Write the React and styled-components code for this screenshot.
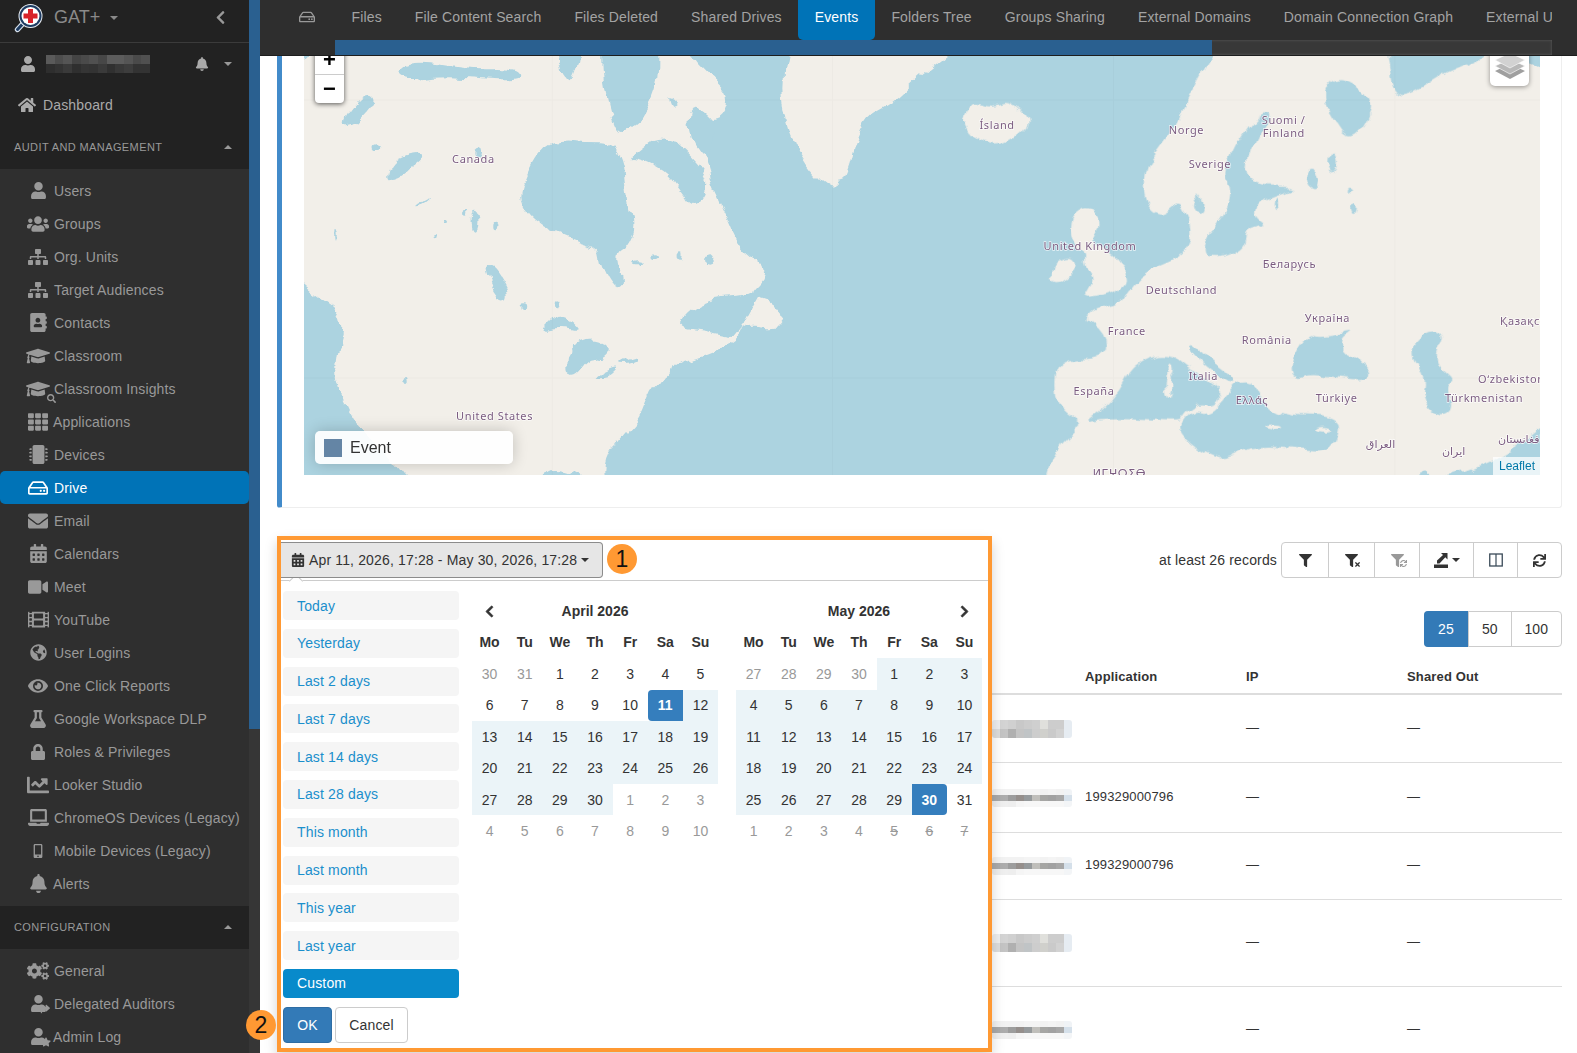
import React from 'react';
import styled, { createGlobalStyle, css } from 'styled-components';
import {
  FaUser, FaUsers, FaSitemap, FaAddressBook, FaGraduationCap, FaTh, FaMicrochip, FaRegHdd, FaEnvelope,
  FaCalendarAlt, FaVideo, FaFilm, FaGlobeAmericas, FaEye, FaFlask, FaLock, FaChartLine, FaLaptop,
  FaMobileAlt, FaBell, FaCogs, FaHome, FaChevronLeft, FaChevronRight, FaFilter, FaSync, FaSearch, FaStar,
  FaShare, FaTimes,
} from 'react-icons/fa';

const Global = createGlobalStyle`
  html, body { margin: 0; padding: 0; height: 1053px; overflow: hidden; background: #fff; }
  body { font-family: "Liberation Sans", Arial, sans-serif; font-size: 14px; color: #333; letter-spacing: 0.15px; }
  * { box-sizing: border-box; }
`;

const Page = styled.div`
  display: grid; grid-template-columns: 249px 11px 1fr; width: 1577px; height: 1053px; overflow: hidden;
`;

/* ---------- sidebar ---------- */
const Sidebar = styled.aside`
  background: #2f2f2f; color: #999; height: 1053px; overflow: hidden;
`;
const DarkTop = styled.div`background: #222;`;
const Brand = styled.div`
  height: 43px; display: flex; align-items: center; padding: 0 20px 7px 14px; border-bottom: 1px solid #3b3b3b;
`;
const BrandName = styled.span`font-size: 18px; color: #8a8a8a; margin-left: 10px; letter-spacing: 0;`;
const Caret = styled.span`
  display: inline-block; width: 0; height: 0; border-left: ${p => p.$s || 4}px solid transparent;
  border-right: ${p => p.$s || 4}px solid transparent;
  ${p => p.$up
    ? css`border-bottom: ${p.$s || 4}px solid ${p.$c || '#999'};`
    : css`border-top: ${p.$s || 4}px solid ${p.$c || '#999'};`}
`;
const BrandCaret = styled(Caret)`margin-left: 10px;`;
const Back = styled.span`margin-left: auto; display: flex; color: #999; font-size: 15px; margin-right: 1px;`;
const UserRow = styled.div`
  height: 41px; display: flex; align-items: center; padding: 0 17px 0 20px; color: #aaa; font-size: 16px;
`;
const BellSlot = styled.span`margin-left: auto; display: flex; font-size: 14px; margin-right: 15px;`;
const Mosaic = styled.div`
  width: ${p => p.$w}px; height: ${p => p.$h}px; flex: none;
  background-color: ${p => p.$bg || 'transparent'};
  background-repeat: no-repeat;
  background-image: ${p => p.$rows.map(r => {
    const step = 100 / r.length;
    return `linear-gradient(90deg, ${r.map((c, i) => `${c} ${i * step}% ${(i + 1) * step}%`).join(', ')})`;
  }).join(', ')};
  background-size: 100% ${p => 100 / p.$rows.length}%;
  background-position: ${p => p.$rows.map((_, i) => `0 ${p.$rows.length > 1 ? (i * 100) / (p.$rows.length - 1) : 0}%`).join(', ')};
  border-radius: ${p => p.$r || 0}px;
`;
const UserBlur = styled(Mosaic)`margin-left: 10px;`;
const Dash = styled.div`
  height: 42px; display: flex; align-items: center; padding-left: 18px; gap: 7px; font-size: 14px; color: #aaa;
  svg { font-size: 18px; }
`;
const Section = styled.div`
  height: ${p => p.$h}px; display: flex; align-items: center; justify-content: space-between;
  padding: 0 17px 2px 14px; background: #222; font-size: 11px; color: #999; letter-spacing: 0.4px;
`;
const MenuList = styled.ul`
  list-style: none; margin: 0; padding: ${p => p.$pad};
`;
const MenuItem = styled.li`
  height: 33px; display: flex; align-items: center; color: ${p => p.$on ? '#fff' : '#999'};
  background: ${p => p.$on ? '#0073b7' : 'transparent'}; border-radius: ${p => p.$on ? '5px' : '0'};
  white-space: nowrap;
`;
const IconSlot = styled.span`
  width: 30px; margin-left: 23px; margin-right: ${p => p.$tight ? 0 : 1}px; display: flex; justify-content: center;
  align-items: center; position: relative; font-size: ${p => p.$size || 18}px; flex: none;
`;
const SmallOver = styled.span`
  position: absolute; right: ${p => p.$right ?? 0}px; bottom: ${p => p.$bottom ?? -2}px; display: flex;
  font-size: ${p => p.$size || 9}px; color: ${p => p.$c || 'inherit'};
`;

/* ---------- scrollbar strip ---------- */
const Strip = styled.div`background: #363636; height: 1053px;`;
const StripThumb = styled.div`height: 729px; background: #2a6090;`;

/* ---------- main ---------- */
const Main = styled.main`min-width: 0; position: relative; z-index: 1;`;
const TopBar = styled.header`
  height: 56px; background: #2e2e2e; border-bottom: 1px solid #1d1d1d;
`;
const TabRow = styled.nav`
  height: 40px; display: flex; align-items: stretch; width: 1292px; overflow: hidden;
`;
const TabIcon = styled.span`
  width: 75px; flex: none; display: flex; align-items: center; padding: 0 0 6px 39px; color: #999; font-size: 16px;
`;
const Tab = styled.a`
  flex: none; display: flex; align-items: center; padding: 0 16.5px 6px; font-size: 14px; white-space: nowrap;
  color: ${p => p.$on ? '#fff' : '#a3a3a3'}; background: ${p => p.$on ? '#0073b7' : 'transparent'};
  border-radius: 0 0 5px 5px;
`;
const HScroll = styled.div`
  height: 15px; margin-left: 75px; width: 1217px;
  background: #383838; box-shadow: inset 0 0 3px #5d5d5d;
`;
const HThumb = styled.div`height: 100%; width: 877px; background: #2a6090;`;

const Content = styled.div`padding: 0 15px 0 17px;`;
const MapPanel = styled.section`
  height: 452px; border: 1px solid #eee; border-top: 0; border-left: 5px solid #428bca;
  border-radius: 0 0 3px 3px; padding-left: 22px; padding-right: 21px; background: #fff;
`;
const MapBox = styled.div`position: relative; height: 419px; overflow: hidden; background: #acd3e0;`;
const MapSvg = styled.svg`display: block; width: 100%; height: 100%;`;
const MapLabel = styled.text`
  font-family: "Noto Sans", "DejaVu Sans", sans-serif; font-size: 11px; letter-spacing: 0.6px; fill: #7b5c80;
  stroke: rgba(255,255,255,.75); stroke-width: 1.5px; paint-order: stroke;
`;
const ZoomCtl = styled.div`
  position: absolute; left: 11px; top: -11px; width: 29px; background: #fff; border-radius: 4px;
  box-shadow: 0 1px 5px rgba(0,0,0,.65);
`;
const ZoomBtn = styled.div`
  height: 29px; display: flex; align-items: center; justify-content: center; font-size: 22px; font-weight: 700;
  color: #000; font-family: "Liberation Sans", sans-serif;
  & + & { border-top: 1px solid #ccc; }
`;
const LayersBtn = styled.div`
  position: absolute; right: 11px; top: -12px; width: 39px; height: 42px; background: #fff; border-radius: 5px;
  box-shadow: 0 1px 5px rgba(0,0,0,.4); display: flex; justify-content: center; align-items: center;
`;
const Legend = styled.div`
  position: absolute; left: 11px; bottom: 11px; width: 198px; height: 33px; border-radius: 5px;
  background: rgba(255,255,255,.92); box-shadow: 0 0 15px rgba(0,0,0,.2); display: flex; align-items: center;
  padding-left: 9px; gap: 8px; font-size: 16px; color: #333; letter-spacing: 0;
`;
const Swatch = styled.span`width: 18px; height: 18px; background: #6485a5;`;
const Attribution = styled.div`
  position: absolute; right: 0; bottom: 0; width: 47px; height: 18px; background: rgba(255,255,255,.75);
  font-size: 12px; color: #0078a8; padding-left: 6px; line-height: 18px; white-space: nowrap; overflow: hidden;
  letter-spacing: 0;
`;

const ToolRow = styled.div`
  position: relative; margin-top: 34px; height: 36px; display: flex; justify-content: flex-end; align-items: center; gap: 4px;
`;
const BtnGroup = styled.div`
  display: flex; height: 36px; border: 1px solid #ccc; border-radius: 4px; background: #fff;
`;
const ToolBtn = styled.span`
  width: ${p => p.$w}px; display: flex; align-items: center; justify-content: center; gap: 4px; position: relative;
  color: ${p => p.$c || '#333'}; font-size: 13px;
  & + & { border-left: 1px solid #ccc; }
`;
const PageRow = styled.div`margin-top: 33px; display: flex; justify-content: flex-end;`;
const PageBtn = styled.span`
  width: ${p => p.$w}px; display: flex; align-items: center; justify-content: center; font-size: 14px;
  color: ${p => p.$on ? '#fff' : '#333'}; background: ${p => p.$on ? '#337ab7' : 'transparent'};
  margin: ${p => p.$on ? '-1px 0 -1px -1px' : '0'};
  border-radius: ${p => p.$on ? '4px 0 0 4px' : '0'};
  & + & { border-left: 1px solid #ccc; }
`;
const TableHead = styled.div`
  margin-top: 13px; height: 35px; border-bottom: 2px solid #ddd; display: grid;
  grid-template-columns: 808px 161px 161px 1fr; align-items: center; font-weight: 700; font-size: 13px;
`;
const TableRow = styled.div`
  height: ${p => p.$h}px; border-bottom: 1px solid #ddd; display: grid;
  grid-template-columns: 808px 161px 161px 1fr; align-items: center; font-size: 13px; padding-bottom: 3px;
`;
const RowBlur = styled(Mosaic)`justify-self: end; margin: 3px 13px 0 0;`;

/* ---------- date range picker ---------- */
const Picker = styled.div`
  position: absolute; left: 0; top: -6px; width: 715px; height: 516px; border: 4px solid #ff9933; background: #fff;
  box-shadow: 0 6px 12px rgba(0,0,0,.175); display: flex; flex-direction: column; z-index: 3;
`;
const PickerHead = styled.div`
  height: 41px; flex: none; padding-top: 2px; display: flex; align-items: flex-start; border-bottom: 1px solid #ccc;
  position: relative;
  &::after {
    content: ''; position: absolute; left: 10px; bottom: -1px; width: 9px; height: 9px;
    border-left: 1px solid #ccc; border-top: 1px solid #ccc; background: #fff; transform: translateY(5px) rotate(45deg);
  }
`;
const RangeToggle = styled.div`
  width: 322px; height: 36px; background: #e6e6e6; border: 1px solid #8c8c8c; border-left: 0; border-radius: 0 4px 4px 0;
  display: flex; align-items: center; padding-left: 10px; gap: 4px; font-size: 14px; color: #333; white-space: nowrap;
  position: relative; z-index: 1; svg { font-size: 14px; }
`;
const Badge = styled.span`
  width: 30px; height: 30px; border-radius: 50%; background: #ff9933; color: #111; font-size: 23px;
  display: flex; align-items: center; justify-content: center; flex: none; letter-spacing: 0;
`;
const BadgeOne = styled(Badge)`margin: 2px 0 0 4px;`;
const BadgeTwo = styled(Badge)`position: absolute; left: -35px; top: 470px;`;
const PickerBody = styled.div`display: flex; flex: 1;`;
const Ranges = styled.div`width: 176px; margin-left: 2px; padding-top: 10px; flex: none;`;
const RangeItem = styled.div`
  height: 29px; margin-bottom: 8.8px; border-radius: 4px; padding-left: 14px; display: flex; align-items: center;
  font-size: 14px; background: ${p => p.$on ? '#088acb' : '#f5f5f5'}; color: ${p => p.$on ? '#fff' : '#1a8fcc'};
`;
const ActionRow = styled.div`display: flex; gap: 3px;`;
const ActionBtn = styled.div`
  width: ${p => p.$w}px; height: 36px; border-radius: 4px; display: flex; align-items: center; justify-content: center;
  font-size: 14px; ${p => p.$primary
    ? css`background: #337ab7; color: #fff; border: 1px solid #2e6da4;`
    : css`background: #fff; color: #333; border: 1px solid #ccc;`}
`;
const Cal = styled.div`
  width: 246px; margin-top: 14px; margin-left: ${p => p.$ml}px; flex: none;
`;
const CalTitle = styled.div`
  height: 32px; display: grid; grid-template-columns: 35px 1fr 35px; align-items: center; justify-items: center;
  font-weight: 700; font-size: 14px; letter-spacing: 0;
  svg { font-size: 13px; color: #333; stroke: currentColor; stroke-width: 30; display: block; }
`;
const CalGrid = styled.div`
  display: grid; grid-template-columns: repeat(7, 1fr); grid-auto-rows: 31.4px;
`;
const WeekDay = styled.div`
  display: flex; align-items: center; justify-content: center; font-weight: 700; font-size: 14px; color: #333;
  letter-spacing: 0; padding-bottom: 2px;
`;
const Day = styled.div`
  display: flex; align-items: center; justify-content: center; font-size: 14px; letter-spacing: 0;
  color: ${p => p.$off ? '#999' : '#333'};
  text-decoration: ${p => p.$strike ? 'line-through' : 'none'};
  background: ${p => p.$range ? '#ebf4f8' : 'transparent'};
  ${p => (p.$start || p.$end) && css`background: #357ebd; color: #fff; font-weight: 700;`}
  ${p => p.$start && css`border-radius: 4px 0 0 4px;`}
  ${p => p.$end && css`border-radius: 0 4px 4px 0;`}
`;

/* ---------- data ---------- */
const Stack = ({ children, small, ...rest }) => (
  <IconSlot {...rest}>{children}{small}</IconSlot>
);
const items = [
  ['Users', <FaUser />, { $size: 17 }],
  ['Groups', <FaUsers />, { $size: 22 }],
  ['Org. Units', <FaSitemap />, { $size: 20 }],
  ['Target Audiences', <FaSitemap />, { $size: 20 }],
  ['Contacts', <FaAddressBook />, { $size: 19 }],
  ['Classroom', <FaGraduationCap />, { $size: 24 }],
  ['Classroom Insights', <FaGraduationCap />, { $size: 24, small: <SmallOver $right={-3} $bottom={-2} $size={9}><FaSearch /></SmallOver> }],
  ['Applications', <FaTh />, { $size: 20, $tight: true }],
  ['Devices', <FaMicrochip />, { $size: 19 }],
  ['Drive', <FaRegHdd />, { $size: 20 }, true],
  ['Email', <FaEnvelope />, { $size: 20 }],
  ['Calendars', <FaCalendarAlt />, { $size: 19 }],
  ['Meet', <FaVideo />, { $size: 20 }],
  ['YouTube', <FaFilm />, { $size: 21 }],
  ['User Logins', <FaGlobeAmericas />, { $size: 17 }],
  ['One Click Reports', <FaEye />, { $size: 20 }],
  ['Google Workspace DLP', <FaFlask />, { $size: 18 }],
  ['Roles & Privileges', <FaLock />, { $size: 16 }],
  ['Looker Studio', <FaChartLine />, { $size: 22 }],
  ['ChromeOS Devices (Legacy)', <FaLaptop />, { $size: 21 }],
  ['Mobile Devices (Legacy)', <FaMobileAlt />, { $size: 14 }],
  ['Alerts', <FaBell />, { $size: 19, $tight: true }],
];
const config = [
  ['General', <FaCogs />, { $size: 22 }],
  ['Delegated Auditors', <FaUser />, { $size: 17, small: <SmallOver $right={3} $bottom={-2} $size={10}><FaShare /></SmallOver> }],
  ['Admin Log', <FaUser />, { $size: 17, $tight: true, small: <SmallOver $right={2} $bottom={-2} $size={10}><FaStar /></SmallOver> }],
];
const tabs = ['Files', 'File Content Search', 'Files Deleted', 'Shared Drives', 'Events', 'Folders Tree', 'Groups Sharing', 'External Domains', 'Domain Connection Graph', 'External Users'];
const ranges = ['Today', 'Yesterday', 'Last 2 days', 'Last 7 days', 'Last 14 days', 'Last 28 days', 'This month', 'Last month', 'This year', 'Last year'];
const weekdays = ['Mo', 'Tu', 'We', 'Th', 'Fr', 'Sa', 'Su'];

const seq = (a, b) => Array.from({ length: b - a + 1 }, (_, i) => a + i);
const april = [
  ...seq(30, 31).map(d => ({ d, off: true })),
  ...seq(1, 30).map(d => ({ d, range: d >= 11, start: d === 11 })),
  ...seq(1, 10).map(d => ({ d, off: true })),
];
const may = [
  ...seq(27, 30).map(d => ({ d, off: true })),
  ...seq(1, 31).map(d => ({ d, range: d <= 30, end: d === 30 })),
  ...seq(1, 7).map(d => ({ d, off: true, strike: d >= 5 })),
];

const labels = [
  ['Canada', 452, 163], ['United States', 456, 420], ['Ísland', 979, 129], ['Norge', 1168, 134], ['Suomi /', 1261, 124],
  ['Finland', 1262, 137], ['Sverige', 1188, 168], ['United Kingdom', 1043, 250], ['Беларусь', 1262, 268], ['Deutschland', 1145, 294],
  ['Україна', 1304, 322], ['Қазақстан', 1499, 325], ['France', 1107, 335], ['România', 1241, 344], ['Italia', 1188, 380],
  ['Oʻzbekiston', 1477, 383], ['Türkmenistan', 1444, 402], ['España', 1073, 395], ['Ελλάς', 1235, 404], ['Türkiye', 1315, 402],
  ['العراق', 1365, 448], ['افغانستان', 1497, 443], ['ایران', 1441, 455], ['ⵍⵎⵖⵔⵉⴱ', 1092, 477],
];

/* closed curve through the midpoints of a polygon: softens the traced coast */
const smooth = a => {
  const mid = (p, q) => `${(p[0] + q[0]) / 2} ${(p[1] + q[1]) / 2}`;
  let d = `M${mid(a[a.length - 1], a[0])}`;
  a.forEach((p, i) => { d += ` Q${p[0]} ${p[1]} ${mid(p, a[(i + 1) % a.length])}`; });
  return `${d}Z`;
};
const naLand = [[0,-100],[1005,-100],[1005,40],[1060,110],[1108,170],[1075,250],[1000,210],[1060,390],[1060,430],[1100,530],[1130,620],[1195,680],[1190,720],[1150,770],[1220,790],[1240,870],[1140,850],[1130,900],[1050,950],[970,970],[965,1010],[915,1040],[890,1130],[850,1180],[810,1250],[815,1340],[790,1340],[690,1270],[600,1340],[340,1340],[300,1270],[210,1160],[160,1040],[155,960],[185,830],[100,760],[40,690]];
const naWater = [
  [[605,450],[640,350],[680,300],[760,310],[830,310],[855,380],[860,480],[880,560],[860,620],[830,640],[850,730],[830,745],[795,680],[795,625],[740,605],[640,550],[605,490]],
  [[855,360],[950,270],[1050,390],[1055,450],[1020,510],[985,450],[950,390],[880,355]],
  [[800,-20],[935,-20],[940,130],[900,240],[855,280],[830,270],[800,120]],
  [[300,100],[350,60],[480,90],[590,85],[600,125],[480,115],[400,110],[330,125]],
  [[680,-20],[755,-20],[730,140],[700,100]],
  [[960,160],[990,190],[970,205]],
  [[1010,190],[1075,250],[1060,370],[1010,300]],
  [[645,875],[700,815],[755,875],[700,860]],
  [[710,1005],[720,920],[780,890],[830,930],[800,970],[770,950],[730,1015]],
  [[775,1015],[845,975],[810,1020]],[[830,970],[885,940],[880,968]],
  [[970,860],[1040,775],[1160,770],[1195,735],[1140,850],[1130,895],[1060,875]],
  [[170,250],[235,150],[260,180],[210,255]],[[275,420],[300,350],[390,335],[310,420]],[[340,505],[400,465],[360,505]],
  [[535,665],[585,770],[550,780],[515,680]],
];
const naLakes = [[500,330,8,16],[490,545,7,24],[470,520,5,10],[545,555,5,10],[425,545,6,5],[395,590,4,8],[250,320,8,10],[700,790,7,12],[1060,660,10,14],[930,650,9,7],[890,670,10,6],[985,645,6,14],[330,1020,4,12],[605,800,7,10],[160,590,3,16],[540,715,10,22]];
const greenland = [[1260,-40],[1230,120],[1250,280],[1310,410],[1375,460],[1420,240],[1500,190],[1568,105],[1720,-40]];
const iceland = [[100,225],[130,185],[170,205],[215,185],[260,235],[240,280],[185,318],[125,290],[105,255]];
const ireland = [[310,720],[320,660],[375,650],[370,700],[330,735]];
const britain = [[355,530],[400,495],[435,540],[405,610],[460,650],[495,710],[480,750],[380,780],[415,720],[390,680],[395,640],[360,600]];
const eurasia = [[740,-40],[660,110],[600,280],[535,380],[535,490],[575,530],[625,470],[650,590],[625,650],[540,690],[500,750],[480,790],[435,800],[385,825],[445,880],[445,960],[325,955],[315,1085],[375,1140],[385,1160],[320,1230],[295,1360],[1620,1360],[1620,-40]];
const euWater = [
  [[1000,100],[1080,180],[1060,250],[1020,300],[985,240],[950,160]],
  [[1110,60],[1130,165],[1175,160],[1260,90],[1360,50],[1360,-20],[1110,-20]],
  [[720,380],[800,215],[845,220],[780,320],[780,440],[910,440],[810,480],[795,530],[830,560],[775,570],[775,630],[680,665],[680,600],[720,530],[745,460]],
  [[875,985],[920,880],[960,900],[1045,865],[980,920],[1085,990],[1060,1025],[930,1000],[900,1020]],
  [[1165,930],[1210,870],[1255,880],[1220,960],[1255,1000],[1280,1030],[1250,1035],[1270,1120],[1220,1130],[1195,1060],[1205,1020]],
  [[380,1150],[460,1090],[510,965],[595,940],[640,985],[670,1010],[720,1060],[705,1100],[650,1095],[620,1130],[620,1145],[460,1130]],
  [[690,1130],[740,1055],[760,1030],[800,1030],[820,1090],[870,1130],[1000,1130],[990,1200],[960,1240],[800,1210],[720,1270],[610,1180],[640,1110]],
  [[650,905],[690,960],[755,1020],[740,1040],[690,990],[645,940]],
  [[1180,1340],[1225,1340],[1200,1275]],
];
const euIslands = [[595,1040,8,40],[600,990,6,20],[670,1105,22,12],[835,1165,20,6],[960,1165,14,7]];
const euLakes = [[935,420,18,34],[985,370,10,30],[660,495,10,24],[1030,505,8,20],[1025,445,6,8],[850,490,5,20]];

const L = ['#5a5a5a', '#4d4d4d', '#555', '#444', '#4a4a4a', '#505050', '#474747', '#5c5c5c', '#5c5c5c', '#555', '#4a4a4a', '#505050'];
const U = ['#2e2e2e', '#333', '#3a3a3a', '#2f2f2f', '#353535', '#333', '#3a3a3a', '#303030', '#383838', '#3d3d3d', '#333', '#333'];
const lightBlur = [
  ['#eee', '#d4d4d4', '#d0d0d0', '#c8c8c8', '#ccc', '#cfcfcf', '#e0e0dc', '#cdcdcd', '#cdcdcd', '#e6ecf2'],
  ['#ddd', '#c4c4c4', '#b0b0b0', '#c4c4c4', '#c0c4c6', '#cdcdcd', '#d0d0cc', '#cacaca', '#d2d2d2', '#e6ecf2'],
];
const darkBlur = [
  ['#f2f2f2', '#f2f2f2', '#f2f2f2', '#f2f2f2', '#f4f4f4', '#f4f4f4', '#f2f2f2', '#f4f4f4', '#f2f2f2', '#f0f3f6'],
  ['#aaa', '#adadad', '#9d9d9d', '#958f8c', '#969a9c', '#c0bfbb', '#a6a6a4', '#a2a2a2', '#a8a8a8', '#d5e0ea'],
  ['#eee', '#efefef', '#eee', '#f5f5f5', '#f7f7f7', '#f7f7f7', '#f7f7f7', '#f7f7f7', '#f7f7f7', '#f3f5f7'],
];
const rows = [
  { h: 68, blur: lightBlur },
  { h: 70, blur: darkBlur, app: '199329000796' },
  { h: 67, blur: darkBlur, app: '199329000796' },
  { h: 87, blur: lightBlur },
  { h: 87, blur: darkBlur },
];

const Logo = () => (
  <svg width="30" height="30" viewBox="0 0 30 30">
    <path d="M9.5 20 L3.5 26.5" stroke="#d5e0ec" strokeWidth="5.4" strokeLinecap="round" />
    <path d="M9.5 20 L3.5 26.5" stroke="#1e3c62" strokeWidth="3" strokeLinecap="round" />
    <circle cx="16.5" cy="13" r="12" fill="#e9eef4" />
    <circle cx="16.5" cy="13" r="11" fill="#1e3c62" />
    <circle cx="16.5" cy="13" r="9" fill="#fff" />
    <path d="M14 6h5v4.5h4.5v5H19V20h-5v-4.5H9.5v-5H14z" fill="#d8232a" />
  </svg>
);
const ExportGlyph = () => (
  <svg width="14" height="15" viewBox="0 0 14 15" fill="#333">
    <rect x="0" y="11.5" width="14" height="3.5" />
    <path d="M7 0 L13.5 0 L13.5 6.5 L11.3 4.3 L5.5 10.5 L3 10.5 L3 7.5 L9 2z" />
  </svg>
);
const ColumnsGlyph = () => (
  <svg width="14" height="14" viewBox="0 0 14 14" fill="none" stroke="#3a4a58">
    <rect x="0.75" y="1" width="12.5" height="12" strokeWidth="1.3" />
    <path d="M7 1v12" strokeWidth="1.2" />
  </svg>
);
const LayersGlyph = () => (
  <svg width="30" height="28" viewBox="0 0 30 28">
    <path d="M15 13 L30 20 L15 28 L0 20z" fill="#9f9f9f" />
    <path d="M15 8 L30 15 L15 23 L0 15z" fill="#b8b8b8" stroke="#fff" strokeWidth="0.6" />
    <path d="M15 2 L30 9 L15 17 L0 9z" fill="#d2d2d2" stroke="#fff" strokeWidth="0.6" />
  </svg>
);

const Calendar = ({ title, days, ml, left, right }) => (
  <Cal $ml={ml}>
    <CalTitle>
      <span>{left && <FaChevronLeft />}</span>
      <span>{title}</span>
      <span>{right && <FaChevronRight />}</span>
    </CalTitle>
    <CalGrid>
      {weekdays.map(w => <WeekDay key={w}>{w}</WeekDay>)}
      {days.map((x, i) => (
        <Day key={i} $off={x.off} $range={x.range} $start={x.start} $end={x.end} $strike={x.strike}>{x.d}</Day>
      ))}
    </CalGrid>
  </Cal>
);

const Menu = ({ list, pad }) => (
  <MenuList $pad={pad}>
    {list.map(([label, icon, opts, on]) => {
      const { small, ...rest } = opts;
      return (
        <MenuItem key={label} $on={on}>
          <Stack {...rest} small={small}>{icon}</Stack>
          <span>{label}</span>
        </MenuItem>
      );
    })}
  </MenuList>
);

export default function App() {
  return (
    <Page>
      <Global />
      <Sidebar>
        <DarkTop>
          <Brand>
            <Logo />
            <BrandName>GAT+</BrandName>
            <BrandCaret $c="#8a8a8a" />
            <Back><FaChevronLeft /></Back>
          </Brand>
          <UserRow>
            <FaUser />
            <UserBlur $w={104} $h={18} $rows={[L, U]} />
            <BellSlot><FaBell /></BellSlot>
            <Caret />
          </UserRow>
          <Dash><FaHome /><span>Dashboard</span></Dash>
          <Section $h={43}><span>AUDIT AND MANAGEMENT</span><Caret $up /></Section>
        </DarkTop>
        <Menu list={items} pad="5px 0 6px" />
        <Section $h={43}><span>CONFIGURATION</span><Caret $up /></Section>
        <Menu list={config} pad="5px 0 0" />
      </Sidebar>
      <Strip><StripThumb /></Strip>
      <Main>
        <TopBar>
          <TabRow>
            <TabIcon><FaRegHdd /></TabIcon>
            {tabs.map(t => <Tab key={t} $on={t === 'Events'}>{t}</Tab>)}
          </TabRow>
          <HScroll><HThumb /></HScroll>
        </TopBar>
        <Content>
          <MapPanel>
            <MapBox>
              <MapSvg viewBox="304 56 1235 419" preserveAspectRatio="none">
                <defs>
                  <filter id="coast" filterUnits="userSpaceOnUse" x="200" y="0" width="1450" height="560">
                    <feTurbulence type="fractalNoise" baseFrequency="0.045" numOctaves="4" seed="7" result="n" />
                    <feDisplacementMap in="SourceGraphic" in2="n" scale="13" xChannelSelector="R" yChannelSelector="G" />
                    <feGaussianBlur stdDeviation="0.35" />
                  </filter>
                </defs>
                <g filter="url(#coast)">
                  <g transform="translate(270 40) scale(0.415 0.3333)">
                    <path d={smooth(naLand)} fill="#f2efe9" />
                    {naWater.map((w, i) => <path key={i} d={smooth(w)} fill="#acd3e0" />)}
                    {naLakes.map(([x, y, rx, ry], i) => <ellipse key={i} cx={x} cy={y} rx={rx} ry={ry} fill="#acd3e0" />)}
                    <path d={smooth(greenland)} fill="#f2efe9" />
                  </g>
                  <g transform="translate(920 40) scale(0.419 0.3333)">
                    {[iceland, ireland, britain, eurasia].map((w, i) => <path key={i} d={smooth(w)} fill="#f2efe9" />)}
                    {euWater.map((w, i) => <path key={i} d={smooth(w)} fill="#acd3e0" />)}
                    {euLakes.map(([x, y, rx, ry], i) => <ellipse key={i} cx={x} cy={y} rx={rx} ry={ry} fill="#acd3e0" />)}
                    {euIslands.map(([x, y, rx, ry], i) => <ellipse key={i} cx={x} cy={y} rx={rx} ry={ry} fill="#f2efe9" />)}
                  </g>
                </g>
                <path d="M552 56V475M832 56V475M1113 56V475M1394 56V475M304 100H1539M304 378H1539" stroke="#000" strokeOpacity="0.025" fill="none" />
                {labels.map(([t, x, y]) => <MapLabel key={t} x={x} y={y}>{t}</MapLabel>)}
              </MapSvg>
              <ZoomCtl><ZoomBtn>+</ZoomBtn><ZoomBtn>−</ZoomBtn></ZoomCtl>
              <LayersBtn><LayersGlyph /></LayersBtn>
              <Legend><Swatch /><span>Event</span></Legend>
              <Attribution>Leaflet</Attribution>
            </MapBox>
          </MapPanel>
          <ToolRow>
            <span>at least 26 records</span>
            <BtnGroup>
              <ToolBtn $w={46}><FaFilter /></ToolBtn>
              <ToolBtn $w={46}><FaFilter /><SmallOver $right={13} $bottom={9} $size={7}><FaTimes /></SmallOver></ToolBtn>
              <ToolBtn $w={45} $c="#999"><FaFilter /><SmallOver $right={12} $bottom={10} $size={7}><FaSync /></SmallOver></ToolBtn>
              <ToolBtn $w={54}><ExportGlyph /><Caret $c="#333" /></ToolBtn>
              <ToolBtn $w={44}><ColumnsGlyph /></ToolBtn>
              <ToolBtn $w={44}><FaSync /></ToolBtn>
            </BtnGroup>
            <Picker>
              <PickerHead>
                <RangeToggle>
                  <FaCalendarAlt /><span>Apr 11, 2026, 17:28 - May 30, 2026, 17:28</span><Caret $c="#333" />
                </RangeToggle>
                <BadgeOne>1</BadgeOne>
              </PickerHead>
              <PickerBody>
                <Ranges>
                  {ranges.map(r => <RangeItem key={r}>{r}</RangeItem>)}
                  <RangeItem $on>Custom</RangeItem>
                  <ActionRow>
                    <ActionBtn $w={49} $primary>OK</ActionBtn>
                    <ActionBtn $w={73}>Cancel</ActionBtn>
                  </ActionRow>
                </Ranges>
                <Calendar title="April 2026" days={april} ml={13} left />
                <Calendar title="May 2026" days={may} ml={18} right />
              </PickerBody>
              <BadgeTwo>2</BadgeTwo>
            </Picker>
          </ToolRow>
          <PageRow>
            <BtnGroup>
              <PageBtn $w={44} $on>25</PageBtn>
              <PageBtn $w={42.7}>50</PageBtn>
              <PageBtn $w={50.3}>100</PageBtn>
            </BtnGroup>
          </PageRow>
          <TableHead>
            <span /><span>Application</span><span>IP</span><span>Shared Out</span>
          </TableHead>
          {rows.map((r, i) => (
            <TableRow key={i} $h={r.h}>
              <RowBlur $w={80} $h={18} $r={3} $rows={r.blur} />
              <span>{r.app || ''}</span><span>—</span><span>—</span>
            </TableRow>
          ))}
        </Content>
      </Main>
    </Page>
  );
}
